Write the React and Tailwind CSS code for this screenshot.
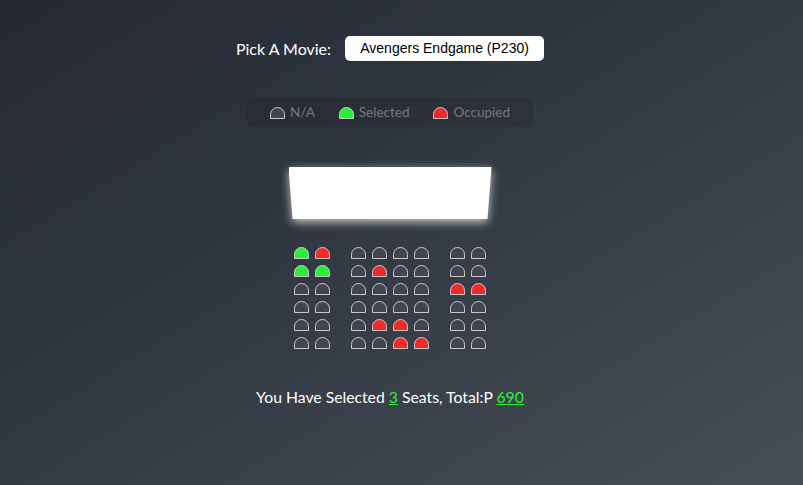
const N = 'n';
const S = 's';
const O = 'o';

const rows = [
  [S, O, N, N, N, N, N, N],
  [S, S, N, O, N, N, N, N],
  [N, N, N, N, N, N, O, O],
  [N, N, N, N, N, N, N, N],
  [N, N, N, O, O, N, N, N],
  [N, N, N, N, O, O, N, N],
];

const seatColor = {
  n: 'bg-[#444451]',
  s: 'bg-[#27f035]',
  o: 'bg-[#ef2a2a]',
};

const Seat = ({ type, className = '' }) => (
  <div
    className={`w-[15px] h-[12px] rounded-t-[10px] border border-[#c9c9cc] ${seatColor[type]} ${className}`}
  />
);

const App = () => {
  return (
    <div className="min-h-screen bg-linear-to-br from-[#232831] to-[#464e58] flex flex-col items-center pr-[23px] pt-[36px] font-['Lato',sans-serif] text-white">
      <div className="flex items-center">
        <label className="text-[16px] mr-[14px]">Pick A Movie:</label>
        <div className="w-[199px] h-[25px] bg-white rounded-[5px] flex items-center justify-center text-black text-[14px] font-['Liberation_Sans',Arial,sans-serif]">
          Avengers Endgame (P230)
        </div>
      </div>

      <ul className="mt-[37px] h-[29px] px-[23px] flex items-center gap-[24px] bg-black/10 rounded-[5px] text-[#777777]">
        <li className="flex items-center">
          <Seat type="n" />
          <small className="ml-[5px] text-[13.5px]">N/A</small>
        </li>
        <li className="flex items-center">
          <Seat type="s" />
          <small className="ml-[5px] text-[13.5px]">Selected</small>
        </li>
        <li className="flex items-center">
          <Seat type="o" />
          <small className="ml-[5px] text-[13.5px]">Occupied</small>
        </li>
      </ul>

      <div className="mt-[40px] drop-shadow-[0_3px_5px_rgba(255,255,255,0.75)]">
        <div className="w-[203px] h-[52px] bg-white [clip-path:polygon(0_0,100%_0,98%_100%,2%_100%)]" />
      </div>

      <div className="mt-[28px] flex flex-col gap-[6px]">
        {rows.map((row, i) => (
          <div key={i} className="flex gap-[6px]">
            {row.map((t, j) => (
              <Seat key={j} type={t} className={j === 2 || j === 6 ? 'ml-[15px]' : ''} />
            ))}
          </div>
        ))}
      </div>

      <p className="mt-[36px] text-[15.75px] leading-[24px]">
        You Have Selected <span className="text-[#27f035] underline">3</span> Seats, Total:P{' '}
        <span className="text-[#27f035] underline">690</span>
      </p>
    </div>
  );
};

export default App;
